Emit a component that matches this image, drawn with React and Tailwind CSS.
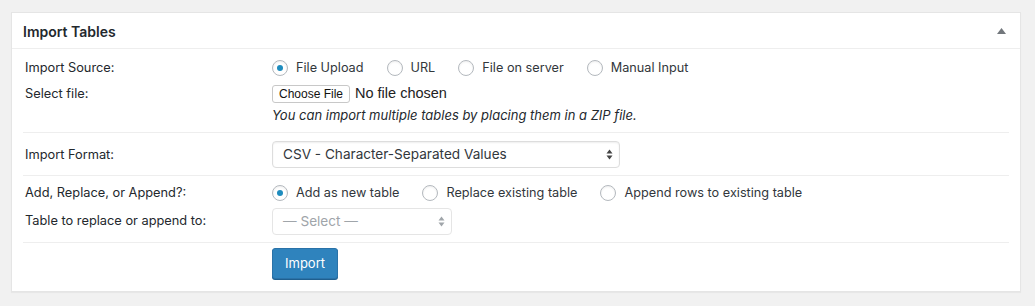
import React from 'react'

const font = { fontFamily: 'Inter, "Liberation Sans", Arial, sans-serif' }
const sysFont = { fontFamily: '"Liberation Sans", Arial, sans-serif' }

function Radio({ checked, label }) {
  return (
    <label className="flex items-center mr-[23px]">
      <span className="w-4 h-4 rounded-full border border-[#b4b9be] bg-white shadow-[inset_0_1px_2px_rgba(0,0,0,0.07)] flex items-center justify-center mr-2">
        {checked && <span className="w-[6px] h-[6px] rounded-full bg-[#1e8cbe]" />}
      </span>
      <span className="text-[12.7px] text-[#32373c]">{label}</span>
    </label>
  )
}

function Arrows({ color }) {
  return (
    <svg width="7" height="11" viewBox="0 0 7 11" className="shrink-0">
      <path d="M3.5 0.5 L6.5 4.5 L0.5 4.5 Z" fill={color} />
      <path d="M3.5 10.5 L6.5 6.5 L0.5 6.5 Z" fill={color} />
    </svg>
  )
}

function Row({ label, children, className = '' }) {
  return (
    <div className={`flex items-center ${className}`}>
      <div className="w-[249px] pl-[2px] text-[12.8px] text-[#23282d]">{label}</div>
      <div className="flex items-center">{children}</div>
    </div>
  )
}

export default function App() {
  return (
    <div className="w-[1035px] h-[306px] bg-[#f1f1f1] pt-[12px] pl-[11px]" style={font}>
      <div className="w-[1010px] bg-white border border-[#e5e5e5] shadow-[0_1px_1px_rgba(0,0,0,0.04)]">
        {/* Header */}
        <div className="h-[36px] border-b border-[#eeeeee] flex items-center justify-between pl-[11px] pr-[14px]">
          <h2 className="text-[14px] font-semibold text-[#23282d] pt-[2px]">Import Tables</h2>
          <svg width="9" height="6" viewBox="0 0 9 6">
            <path d="M4.5 0 L9 6 L0 6 Z" fill="#72777c" />
          </svg>
        </div>

        <div className="px-[11px]">
          {/* Source */}
          <div className="pt-[6px] pb-[7px] border-b border-[#eeeeee]">
            <Row label="Import Source:" className="h-[26px]">
              <Radio checked label="File Upload" />
              <Radio label="URL" />
              <Radio label="File on server" />
              <Radio label="Manual Input" />
            </Row>
            <Row label="Select file:" className="h-[26px]">
              <button
                className="h-[18px] px-[6px] border border-[#c8c8c8] rounded-[3px] bg-white text-[12px] text-[#111] leading-none mr-[5px]"
                style={sysFont}
              >
                Choose File
              </button>
              <span className="text-[14.5px] text-[#222]" style={sysFont}>No file chosen</span>
            </Row>
            <Row label="" className="h-[18px]">
              <span className="text-[13px] italic text-[#23282d]">You can import multiple tables by placing them in a ZIP file.</span>
            </Row>
          </div>

          {/* Format */}
          <div className="pt-[8px] pb-[7px] border-b border-[#eeeeee]">
            <Row label="Import Format:" className="h-[27px]">
              <div className="w-[348px] h-[27px] border border-[#dddddd] rounded-[4px] shadow-[inset_0_1px_2px_rgba(0,0,0,0.07)] flex items-center justify-between pl-[10px] pr-[6px]">
                <span className="text-[13.6px] text-[#32373c]">CSV - Character-Separated Values</span>
                <Arrows color="#444" />
              </div>
            </Row>
          </div>

          {/* Add / Replace */}
          <div className="pt-[6px] pb-[8px] border-b border-[#eeeeee]">
            <Row label="Add, Replace, or Append?:" className="h-[22px]">
              <Radio checked label="Add as new table" />
              <Radio label="Replace existing table" />
              <Radio label="Append rows to existing table" />
            </Row>
            <Row label="Table to replace or append to:" className="h-[26px] mt-[4px]">
              <div className="w-[180px] h-[27px] border border-[#e5e5e5] rounded-[4px] bg-white flex items-center justify-between pl-[10px] pr-[6px]">
                <span className="text-[13.6px] text-[#a0a5aa]">— Select —</span>
                <Arrows color="#a0a5aa" />
              </div>
            </Row>
          </div>

          {/* Submit */}
          <div className="pt-[5px] pb-[12px]">
            <Row label="" className="h-[31px]">
              <button className="h-[31px] w-[66px] rounded-[3px] bg-[#2f83bd] border border-[#2a72a8] shadow-[0_1px_0_#1f5f8f] text-white text-[13px]">
                Import
              </button>
            </Row>
          </div>
        </div>
      </div>
    </div>
  )
}
